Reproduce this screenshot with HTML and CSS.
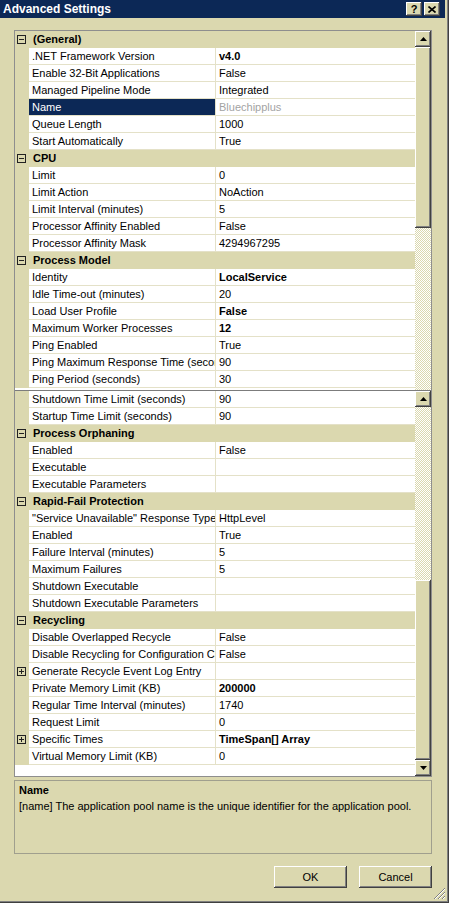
FILE: index.html
```html
<!DOCTYPE html>
<html>
<head>
<meta charset="utf-8">
<link rel="stylesheet" href="styles.css">
</head>
<body>
<div class="window">
  <div class="titlebar">
    <span class="title">Advanced Settings</span>
    <div class="tbtns">
      <span class="tbtn">?</span>
      <span class="tbtn"><svg width="8" height="7" viewBox="0 0 8 7"><path d="M0.5 0.5 L7.5 6.5 M7.5 0.5 L0.5 6.5" stroke="#000" stroke-width="1.6"/></svg></span>
    </div>
  </div>
  <div class="content">
    <div class="grid">
      <div class="pane pane1">
        <div class="rows">
          <div class="row cat"><span class="gut"><svg class="tog" width="9" height="9" viewBox="0 0 9 9"><rect x="0.5" y="0.5" width="8" height="8" fill="none" stroke="#222"/><path d="M2 4.5H7" stroke="#222"/></svg></span><span class="catname">(General)</span></div>
          <div class="row"><span class="gut"></span><span class="lbl">.NET Framework Version</span><span class="val b">v4.0</span></div>
          <div class="row"><span class="gut"></span><span class="lbl">Enable 32-Bit Applications</span><span class="val">False</span></div>
          <div class="row"><span class="gut"></span><span class="lbl">Managed Pipeline Mode</span><span class="val">Integrated</span></div>
          <div class="row"><span class="gut"></span><span class="lbl sel">Name</span><span class="val ro">Bluechipplus</span></div>
          <div class="row"><span class="gut"></span><span class="lbl">Queue Length</span><span class="val">1000</span></div>
          <div class="row"><span class="gut"></span><span class="lbl">Start Automatically</span><span class="val">True</span></div>
          <div class="row cat"><span class="gut"><svg class="tog" width="9" height="9" viewBox="0 0 9 9"><rect x="0.5" y="0.5" width="8" height="8" fill="none" stroke="#222"/><path d="M2 4.5H7" stroke="#222"/></svg></span><span class="catname">CPU</span></div>
          <div class="row"><span class="gut"></span><span class="lbl">Limit</span><span class="val">0</span></div>
          <div class="row"><span class="gut"></span><span class="lbl">Limit Action</span><span class="val">NoAction</span></div>
          <div class="row"><span class="gut"></span><span class="lbl">Limit Interval (minutes)</span><span class="val">5</span></div>
          <div class="row"><span class="gut"></span><span class="lbl">Processor Affinity Enabled</span><span class="val">False</span></div>
          <div class="row"><span class="gut"></span><span class="lbl">Processor Affinity Mask</span><span class="val">4294967295</span></div>
          <div class="row cat"><span class="gut"><svg class="tog" width="9" height="9" viewBox="0 0 9 9"><rect x="0.5" y="0.5" width="8" height="8" fill="none" stroke="#222"/><path d="M2 4.5H7" stroke="#222"/></svg></span><span class="catname">Process Model</span></div>
          <div class="row"><span class="gut"></span><span class="lbl">Identity</span><span class="val b">LocalService</span></div>
          <div class="row"><span class="gut"></span><span class="lbl">Idle Time-out (minutes)</span><span class="val">20</span></div>
          <div class="row"><span class="gut"></span><span class="lbl">Load User Profile</span><span class="val b">False</span></div>
          <div class="row"><span class="gut"></span><span class="lbl">Maximum Worker Processes</span><span class="val b">12</span></div>
          <div class="row"><span class="gut"></span><span class="lbl">Ping Enabled</span><span class="val">True</span></div>
          <div class="row"><span class="gut"></span><span class="lbl">Ping Maximum Response Time (seconds)</span><span class="val">90</span></div>
          <div class="row"><span class="gut"></span><span class="lbl">Ping Period (seconds)</span><span class="val">30</span></div>
        </div>
        <div class="vscroll">
          <span class="sbtn"><svg width="7" height="4" viewBox="0 0 7 4"><path d="M3.5 0 L7 4 L0 4Z" fill="#000"/></svg></span>
          <span class="thumb t1"></span>
          <span class="track"></span>
        </div>
      </div>
      <div class="pane pane2">
        <div class="rows">
          <div class="row"><span class="gut"></span><span class="lbl">Shutdown Time Limit (seconds)</span><span class="val">90</span></div>
          <div class="row"><span class="gut"></span><span class="lbl">Startup Time Limit (seconds)</span><span class="val">90</span></div>
          <div class="row cat"><span class="gut"><svg class="tog" width="9" height="9" viewBox="0 0 9 9"><rect x="0.5" y="0.5" width="8" height="8" fill="none" stroke="#222"/><path d="M2 4.5H7" stroke="#222"/></svg></span><span class="catname">Process Orphaning</span></div>
          <div class="row"><span class="gut"></span><span class="lbl">Enabled</span><span class="val">False</span></div>
          <div class="row"><span class="gut"></span><span class="lbl">Executable</span><span class="val"></span></div>
          <div class="row"><span class="gut"></span><span class="lbl">Executable Parameters</span><span class="val"></span></div>
          <div class="row cat"><span class="gut"><svg class="tog" width="9" height="9" viewBox="0 0 9 9"><rect x="0.5" y="0.5" width="8" height="8" fill="none" stroke="#222"/><path d="M2 4.5H7" stroke="#222"/></svg></span><span class="catname">Rapid-Fail Protection</span></div>
          <div class="row"><span class="gut"></span><span class="lbl">"Service Unavailable" Response Type</span><span class="val">HttpLevel</span></div>
          <div class="row"><span class="gut"></span><span class="lbl">Enabled</span><span class="val">True</span></div>
          <div class="row"><span class="gut"></span><span class="lbl">Failure Interval (minutes)</span><span class="val">5</span></div>
          <div class="row"><span class="gut"></span><span class="lbl">Maximum Failures</span><span class="val">5</span></div>
          <div class="row"><span class="gut"></span><span class="lbl">Shutdown Executable</span><span class="val"></span></div>
          <div class="row"><span class="gut"></span><span class="lbl">Shutdown Executable Parameters</span><span class="val"></span></div>
          <div class="row cat"><span class="gut"><svg class="tog" width="9" height="9" viewBox="0 0 9 9"><rect x="0.5" y="0.5" width="8" height="8" fill="none" stroke="#222"/><path d="M2 4.5H7" stroke="#222"/></svg></span><span class="catname">Recycling</span></div>
          <div class="row"><span class="gut"></span><span class="lbl">Disable Overlapped Recycle</span><span class="val">False</span></div>
          <div class="row"><span class="gut"></span><span class="lbl">Disable Recycling for Configuration Changes</span><span class="val">False</span></div>
          <div class="row"><span class="gut"><svg class="tog" width="9" height="9" viewBox="0 0 9 9"><rect x="0.5" y="0.5" width="8" height="8" fill="none" stroke="#222"/><path d="M2 4.5H7M4.5 2V7" stroke="#222"/></svg></span><span class="lbl">Generate Recycle Event Log Entry</span><span class="val"></span></div>
          <div class="row"><span class="gut"></span><span class="lbl">Private Memory Limit (KB)</span><span class="val b">200000</span></div>
          <div class="row"><span class="gut"></span><span class="lbl">Regular Time Interval (minutes)</span><span class="val">1740</span></div>
          <div class="row"><span class="gut"></span><span class="lbl">Request Limit</span><span class="val">0</span></div>
          <div class="row"><span class="gut"><svg class="tog" width="9" height="9" viewBox="0 0 9 9"><rect x="0.5" y="0.5" width="8" height="8" fill="none" stroke="#222"/><path d="M2 4.5H7M4.5 2V7" stroke="#222"/></svg></span><span class="lbl">Specific Times</span><span class="val b">TimeSpan[] Array</span></div>
          <div class="row"><span class="gut"></span><span class="lbl">Virtual Memory Limit (KB)</span><span class="val">0</span></div>
        </div>
        <div class="vscroll">
          <span class="sbtn"><svg width="7" height="4" viewBox="0 0 7 4"><path d="M3.5 0 L7 4 L0 4Z" fill="#000"/></svg></span>
          <span class="track t2"></span>
          <span class="thumb t3"></span>
          <span class="sbtn"><svg width="7" height="4" viewBox="0 0 7 4"><path d="M0 0 L7 0 L3.5 4Z" fill="#000"/></svg></span>
        </div>
      </div>
    </div>
    <div class="help">
      <div class="help-title">Name</div>
      <div class="help-text">[name] The application pool name is the unique identifier for the application pool.</div>
    </div>
    <div class="buttons">
      <button class="btn">OK</button>
      <button class="btn">Cancel</button>
    </div>
  </div>
  <svg class="grip" width="13" height="13" viewBox="0 0 13 13">
    <path d="M12 1 L1 12 M12 5 L5 12 M12 9 L9 12" stroke="#808080" stroke-width="1"/>
    <path d="M12 2 L2 12 M12 6 L6 12 M12 10 L10 12" stroke="#fff" stroke-width="1"/>
  </svg>
</div>
</body>
</html>
```

FILE: styles.css
```css
html, body {
  margin: 0;
  padding: 0;
}
body {
  font-family: "Liberation Sans", Arial, sans-serif;
  font-size: 11px;
  color: #000;
  background: #dbd8af;
}
.window {
  position: relative;
  width: 449px;
  height: 903px;
  box-sizing: border-box;
  background: #dbd8af;
  border-right: 1px solid #404040;
  border-bottom: 1px solid #404040;
  box-shadow: inset -1px -1px #808080;
  display: flex;
  flex-direction: column;
}
.titlebar {
  height: 18px;
  margin-right: 3px;
  background: #0c2856;
  color: #fff;
  display: flex;
  align-items: center;
  justify-content: space-between;
  padding: 0 5px 0 3px;
  box-sizing: border-box;
}
.title {
  font-weight: bold;
  font-size: 12px;
  line-height: 18px;
}
.tbtns {
  display: flex;
  gap: 2px;
}
.tbtn {
  width: 16px;
  height: 14px;
  box-sizing: border-box;
  background: #dbd8af;
  color: #000;
  font-weight: bold;
  font-size: 11px;
  line-height: 13px;
  text-align: center;
  display: flex;
  align-items: center;
  justify-content: center;
  box-shadow: inset -1px -1px #404040, inset 1px 1px #fff, inset -2px -2px #808080;
}
.content {
  flex: 1;
  display: flex;
  flex-direction: column;
  padding: 12px 15px 0 14px;
}
.grid {
  width: 418px;
  box-sizing: border-box;
  border: 1px solid #8e8e8e;
  background: #fff;
}
.pane {
  display: flex;
}
.pane1 {
  height: 359px;
}
.pane2 {
  height: 386px;
  border-top: 1px solid #7c7c7c;
  box-sizing: border-box;
}
.rows {
  width: 400px;
  background: #fff;
  overflow: hidden;
}
.row {
  display: flex;
  height: 17px;
}
.gut {
  width: 14px;
  flex: none;
  background: #dbd8af;
  display: flex;
  align-items: center;
  padding-left: 2px;
  box-sizing: border-box;
}
.tog {
  display: block;
}
.lbl {
  width: 187px;
  flex: none;
  box-sizing: border-box;
  padding-left: 3px;
  line-height: 16px;
  border-right: 1px solid #e4e1c8;
  border-bottom: 1px solid #e4e1c8;
  white-space: nowrap;
  overflow: hidden;
}
.lbl.sel {
  background: #0c2856;
  color: #fff;
}
.val {
  flex: 1;
  box-sizing: border-box;
  padding-left: 3px;
  line-height: 16px;
  border-bottom: 1px solid #e4e1c8;
  white-space: nowrap;
  overflow: hidden;
}
.val.b {
  font-weight: bold;
}
.val.ro {
  color: #a3a3a3;
}
.row.cat {
  background: #dbd8af;
}
.catname {
  font-weight: bold;
  padding-left: 4px;
  line-height: 17px;
}
.vscroll {
  width: 16px;
  display: flex;
  flex-direction: column;
}
.sbtn {
  width: 16px;
  height: 16px;
  flex: none;
  box-sizing: border-box;
  background: #dbd8af;
  display: flex;
  align-items: center;
  justify-content: center;
  box-shadow: inset -1px -1px #404040, inset 1px 1px #fff, inset -2px -2px #808080;
}
.thumb {
  flex: none;
  background: #dbd8af;
  box-shadow: inset -1px -1px #404040, inset 1px 1px #fff, inset -2px -2px #808080;
}
.t1 {
  height: 181px;
}
.t3 {
  height: 180px;
}
.track {
  flex: 1;
  background-color: #fff;
  background-image: repeating-conic-gradient(#dbd8af 0 25%, #fff 0 50%);
  background-size: 2px 2px;
}
.t2 {
  flex: none;
  height: 173px;
}
.help {
  margin-top: 3px;
  width: 418px;
  height: 74px;
  box-sizing: border-box;
  border: 1px solid #a09f8e;
  padding: 2px 4px;
}
.help-title {
  font-weight: bold;
  line-height: 15px;
}
.help-text {
  line-height: 16px;
  white-space: nowrap;
}
.buttons {
  margin-top: 12px;
  width: 418px;
  display: flex;
  justify-content: flex-end;
  gap: 12px;
}
.btn {
  width: 73px;
  height: 22px;
  border: none;
  padding: 0;
  background: #dbd8af;
  font-family: "Liberation Sans", Arial, sans-serif;
  font-size: 11px;
  color: #000;
  box-shadow: inset -1px -1px #404040, inset 1px 1px #fff, inset -2px -2px #808080;
}
.grip {
  position: absolute;
  right: 2px;
  bottom: 2px;
}
```
